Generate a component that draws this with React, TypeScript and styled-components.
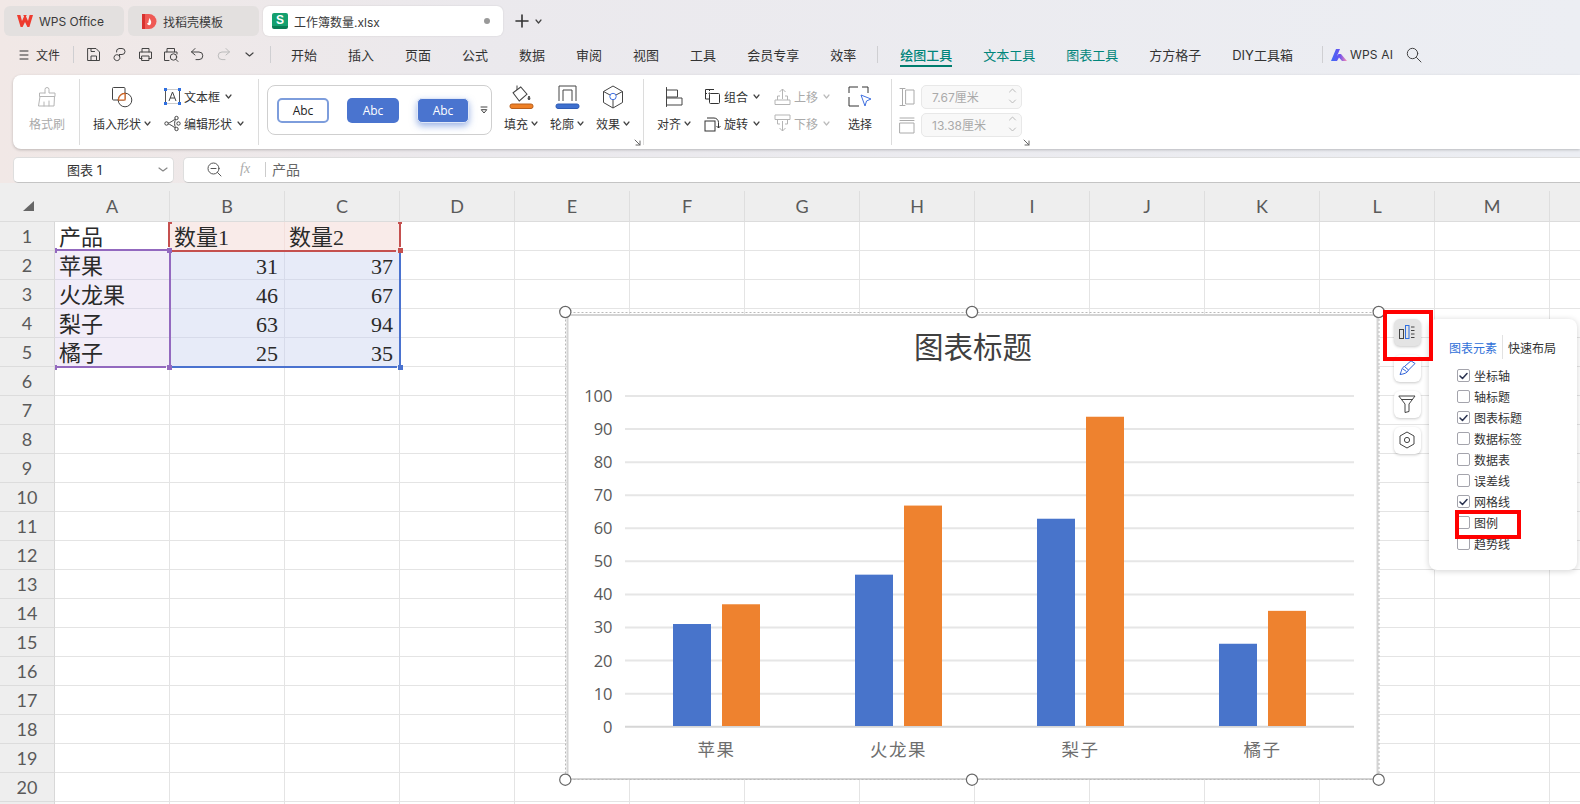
import React from "react";
import styled, { createGlobalStyle } from "styled-components";

const UI = `Inter, "Noto Sans CJK SC", sans-serif`;
const SHEET = `"Liberation Serif", "Noto Sans CJK SC", serif`;

const Global = createGlobalStyle`
  html, body { margin: 0; padding: 0; width: 1580px; height: 804px; overflow: hidden; background: #eee; }
  * { box-sizing: border-box; }
`;

const Page = styled.div`
  width: 1580px; height: 804px; overflow: hidden; display: flex; flex-direction: column;
  font-family: ${UI}; font-size: 12px; color: #333;
  background: linear-gradient(90deg, #f1e8e6 0%, #ebe9ed 30%, #eceef3 100%);
`;

/* ---------- tabs ---------- */
const TabBar = styled.div`display: flex; align-items: stretch; height: 36px; padding: 6px 0 0 4px; gap: 4px;`;
const Tab = styled.div<{ $w: number; $active?: boolean; $pad?: number }>`
  width: ${p => p.$w}px; display: flex; align-items: center; gap: 6px; padding-left: ${p => p.$pad ?? 13}px;
  border-radius: 6px; background: ${p => (p.$active ? "#fff" : "#e3e0df")}; color: #3a3a3a;
  box-shadow: ${p => (p.$active ? "0 0 2px rgba(0,0,0,.12)" : "none")};
`;
const SheetBadge = styled.span`
  width: 16px; height: 16px; border-radius: 2px; background: linear-gradient(#14a06f 80%, #0a7c55 80%);
  color: #fff; font: 700 12px/14px "Liberation Sans", sans-serif; text-align: center;
`;
const TabDot = styled.span`width: 6px; height: 6px; border-radius: 50%; background: #999; margin-left: auto; margin-right: 13px;`;
const NewTab = styled.div`display: flex; align-items: center; gap: 6px; padding-left: 8px; color: #333;`;

/* ---------- menu ---------- */
const MenuBar = styled.div`display: flex; align-items: center; height: 39px; padding: 0 0 2px 19px; flex: none;`;
const MenuFile = styled.div`display: flex; align-items: center; gap: 7px; width: 54px;`;
const MenuSep = styled.span<{ $l: number; $r: number }>`width: 1px; height: 17px; background: #cfcfd2; margin: 0 ${p => p.$r}px 0 ${p => p.$l}px;`;
const QuickIcon = styled.span`width: 26px; display: flex; justify-content: center;`;
const MenuItems = styled.div`display: flex; gap: 31px; align-items: center;`;
const MenuItem = styled.span<{ $tone?: "active" | "green" }>`
  position: relative; font-size: 13px; line-height: 18px; white-space: nowrap;
  color: ${p => (p.$tone ? "#00857a" : "#333")};
  font-weight: ${p => (p.$tone === "active" ? 500 : 400)};
  &::after { content: ${p => (p.$tone === "active" ? '""' : "none")}; position: absolute; left: 0; right: 0; bottom: -3px; height: 2px; background: #007d6e; }
`;
const AiBlock = styled.div`display: flex; align-items: center; gap: 3px; margin-right: 13px; letter-spacing: .2px;`;

/* ---------- ribbon ---------- */
const Ribbon = styled.div`
  height: 74px; margin-left: 13px; flex: none; display: flex; padding: 4px 0; background: #fff;
  border-radius: 8px 0 0 8px; box-shadow: 0 1px 3px rgba(0,0,0,.22);
`;
const Group = styled.div<{ $w: number; $pad?: number; $plain?: boolean }>`
  position: relative; width: ${p => p.$w}px; flex: none; display: flex; padding: 4px 0 0 ${p => p.$pad || 0}px;
  border-right: ${p => (p.$plain ? "none" : "1px solid #dcdcdc")};
`;
const BigButton = styled.div<{ $w: number; $off?: boolean; $ml?: number }>`
  width: ${p => p.$w}px; margin-left: ${p => p.$ml || 0}px; display: grid; grid-template-rows: 27px 26px; justify-items: center; align-items: center;
  color: ${p => (p.$off ? "#aaa" : "#333")}; white-space: nowrap;
`;
const Label = styled.span`display: inline-flex; align-items: center; gap: 3px;`;
const Stack = styled.div<{ $w: number; $ml?: number; $off?: boolean }>`
  width: ${p => p.$w}px; margin-left: ${p => p.$ml || 0}px; display: grid; grid-template-rows: 27px 26px; color: ${p => (p.$off ? "#aaa" : "#333")};
`;
const StackRow = styled.div`
  display: flex; align-items: center; gap: 3px; white-space: nowrap;
  & > svg:last-child { margin-left: 2px; }
`;
const StackIcon = styled.span`width: 17px; display: flex; justify-content: center; flex: none;`;
const StyleBox = styled.div`
  width: 225px; height: 50px; margin: 2px 6px 0 8px; display: flex; align-items: center; padding-left: 9px; position: relative;
  border: 1px solid #cfcfcf; border-radius: 8px; flex: none;
`;
const Abc = styled.div<{ $kind: "line" | "fill" | "glow"; $ml?: number }>`
  width: 52px; height: 25px; margin-left: ${p => p.$ml || 0}px; border-radius: 5px; display: flex; align-items: center; justify-content: center;
  font: 12px "Open Sans", sans-serif;
  color: ${p => (p.$kind === "line" ? "#222" : "#fff")};
  background: ${p => (p.$kind === "line" ? "#fff" : "#4a74cf")};
  border: ${p => (p.$kind === "line" ? "2px solid #7d9ddc" : p.$kind === "glow" ? "1px solid #dfe7f7" : "none")};
  box-shadow: ${p => (p.$kind === "glow" ? "0 3px 7px rgba(74,116,207,.55)" : "none")};
`;
const MoreStyles = styled.span`position: absolute; right: 3px; top: 19px; display: flex;`;
const Corner = styled.span`position: absolute; right: 2px; bottom: -1px; display: flex;`;
const SizeRows = styled.div`display: flex; flex-direction: column; gap: 4px; padding-top: 2px;`;
const SizeRow = styled.div`display: flex; align-items: center; gap: 6px;`;
const Spinner = styled.div`
  width: 101px; height: 24px; border: 1px solid #e8e8e8; border-radius: 5px; background: #f8f8f8; color: #aaa;
  display: flex; align-items: center; justify-content: space-between; padding: 0 4px 2px 10px;
`;

/* ---------- formula ---------- */
const FormulaRow = styled.div`display: flex; height: 26px; margin: 8px 0 0 13px; gap: 9px; flex: none;`;
const NameBox = styled.div`
  width: 161px; background: #fff; border: 1px solid #dedede; border-bottom-color: #c4c4c4; border-radius: 5px;
  display: flex; align-items: center; padding: 0 5px 2px 53px; justify-content: space-between; font-size: 13px;
`;
const Formula = styled.div`
  flex: 1; background: #fff; border: 1px solid #dedede; border-right: none; border-bottom-color: #c4c4c4; border-radius: 5px 0 0 5px;
  display: flex; align-items: center; padding: 0 0 2px 23px; color: #666;
`;
const Fx = styled.span`width: 36px; padding-left: 18px; font: italic 14px "Liberation Serif", serif; color: #aaa;`;
const FormulaSep = styled.span`width: 1px; height: 15px; background: #ccc; margin: 0 6px 0 7px;`;
const FormulaText = styled.span`font-size: 14px;`;

/* ---------- sheet ---------- */
const SheetArea = styled.div`position: relative; flex: 1; background: #fff; overflow: hidden;`;
const HeaderRow = styled.div`display: flex; height: 38.5px; padding-top: 8px; background: #eee; border-bottom: 1px solid #dcdcdc;`;
const CornerCell = styled.div`width: 55px; flex: none; display: flex; align-items: center; justify-content: center; padding-left: 2px;`;
const ColHead = styled.div`
  width: 115px; flex: none; display: flex; align-items: center; justify-content: center; border-right: 1px solid #dedede;
  font: 18px Lato, sans-serif; color: #5a5a5a;
`;
const Row = styled.div`display: flex; height: 29.05px;`;
const RowHead = styled.div`
  width: 55px; flex: none; background: #eee; border-right: 1px solid #d8d8d8; border-bottom: 1px solid #dcdcdc;
  display: flex; align-items: center; justify-content: center; font: 18px Lato, sans-serif; color: #5a5a5a;
`;
const tints = { none: ["#fff", "#e4e4e4"], purple: ["#f2edf8", "#dcd9e6"], red: ["#f9ebe9", "#f3dfdc"], blue: ["#e7ebf8", "#d7dbea"] } as const;
const Cell = styled.div<{ $tint: keyof typeof tints; $num?: boolean }>`
  width: 115px; flex: none; padding: 0 6px 0 4px; display: flex; align-items: flex-end;
  justify-content: ${p => (p.$num ? "flex-end" : "flex-start")};
  background: ${p => tints[p.$tint][0]};
  border-right: 1px solid ${p => tints[p.$tint][1]}; border-bottom: 1px solid ${p => tints[p.$tint][1]};
  font: 22px/24px ${SHEET}; color: #2a2a2a; white-space: nowrap;
`;
/* coloured reference ranges lie over the cells */
const RangeMark = styled.span<{ $x: number; $y: number; $w: number; $h: number; $c: string }>`
  position: absolute; left: ${p => p.$x}px; top: ${p => p.$y - 183}px; width: ${p => p.$w}px; height: ${p => p.$h}px; background: ${p => p.$c};
`;

/* ---------- chart ---------- */
const ChartFrame = styled.div`position: absolute; left: 565px; top: 129px; width: 814px; height: 468px;`;
const ChartSvg = styled.svg`display: block; overflow: visible;`;
const ChartTools = styled.div`position: absolute; left: 1393.5px; top: 135.5px; display: flex; flex-direction: column; gap: 9px;`;
const ToolButton = styled.div<{ $on?: boolean }>`
  width: 27px; height: 27px; border-radius: 6px; display: flex; align-items: center; justify-content: center;
  background: ${p => (p.$on ? "#e4e4e4" : "#fff")}; box-shadow: 0 1px 3px rgba(0,0,0,.22);
`;
const Panel = styled.div`
  position: absolute; left: 1429px; top: 136px; width: 148px; height: 251px; background: #fff; border-radius: 8px;
  box-shadow: 0 1px 6px rgba(0,0,0,.18); padding-top: 16px; display: flex; flex-direction: column;
`;
const PanelTabs = styled.div`display: flex; align-items: center; height: 24px; padding-left: 20px;`;
const PanelTab = styled.span<{ $on?: boolean }>`color: ${p => (p.$on ? "#2f6fd8" : "#333")};`;
const PanelSep = styled.span`width: 1px; height: 24px; background: #e2e2e2; margin: 0 5px;`;
const OptionList = styled.div`padding: 6px 0 0 28px;`;
const Option = styled.div`display: flex; align-items: center; height: 21px; gap: 4px; color: #333;`;
const Check = styled.span`
  width: 13px; height: 13px; border: 1px solid #a4a4ac; border-radius: 2px; background: #fff; display: flex; align-items: center; justify-content: center; flex: none;
`;
const RedBox = styled.div<{ $x: number; $y: number; $w: number; $h: number }>`
  position: absolute; left: ${p => p.$x}px; top: ${p => p.$y - 183}px; width: ${p => p.$w}px; height: ${p => p.$h}px; border: 4px solid #f00;
`;

/* ---------- icons ---------- */
const Svg: React.FC<{ w?: number; h?: number; c?: string; sw?: number; children: React.ReactNode }> = ({ w = 16, h, c = "#444", sw = 1, children }) => (
  <svg width={w} height={h ?? w} viewBox={`0 0 ${w} ${h ?? w}`} fill="none" stroke={c} strokeWidth={sw} strokeLinecap="round" strokeLinejoin="round">{children}</svg>
);
const Chev: React.FC<{ c?: string; w?: number }> = ({ c = "#444", w = 7 }) => (
  <Svg w={w} h={5} c={c} sw={1.2}><path d={`M1 1 L${w / 2} 4 L${w - 1} 1`} /></Svg>
);
const Updown: React.FC = () => (
  <Svg w={9} h={18} c="#bbb"><path d="M1.5 5 L4.5 2 L7.5 5 M1.5 13 L4.5 16 L7.5 13" /></Svg>
);
const CornerArrow: React.FC = () => (
  <Svg w={7} h={7} c="#666"><path d="M1 1 L6 6 M6 2 V6 H2" /></Svg>
);

const WpsLogo = () => (
  <svg width="16" height="12" viewBox="0 0 16 12"><path d="M0 0 H3.4 L5 6 L7 1.6 H9 L11 6 L12.6 0 H16 L12.4 12 H10.4 L8 7 L5.6 12 H3.6 Z M6.2 0 H9.8 L8 3 Z" fill="#ee3b2e" /></svg>
);
const DocerLogo = () => (
  <svg width="15" height="15" viewBox="0 0 15 15">
    <path d="M0 0 H7 A7.5 7.5 0 0 1 7 15 H0 Z" fill="#ef5a55" /><rect width="3" height="15" fill="#d8322f" />
    <path d="M7.5 4 C9 7 10 8 8.5 10.5 C7.5 12 5 11 5 9 C6 9.5 6.5 9 6.5 8 C6.5 7 7 5.5 7.5 4 Z" fill="#fff" />
  </svg>
);
const AiLogo = () => (
  <svg width="16" height="12" viewBox="0 0 16 12">
    <defs><linearGradient id="ai" x1="0" x2="1"><stop offset="0" stopColor="#3d6cf5" /><stop offset=".55" stopColor="#6a52f0" /><stop offset="1" stopColor="#ff8fb0" /></linearGradient></defs>
    <path d="M0 12 L5 0 H9 L6 7 L7.5 5 L10 5 L16 12 H11 L8 8.5 L6 12 Z" fill="url(#ai)" />
  </svg>
);
const iSave = <Svg w={15}><path d="M2 1.5 H10 L13.5 5 V13.5 H2 Z M5 13.5 V9 H10.5 V13.5 M5 1.5 V4.5 H8.5" /></Svg>;
const iKey = <Svg w={15}><path d="M7.5 7.5 H10 A3 3 0 0 0 10 1.5 H7 A3 3 0 0 0 4.5 5 M7.5 7.5 V9 M7.5 9 A3 3 0 1 1 2 10.5 A3 3 0 0 1 7.5 9" /></Svg>;
const iPrint = <Svg w={15}><path d="M4 5 V1.5 H11 V5 M4 11.5 H1.5 V5 H13.5 V11.5 H11 M4 9 H11 V13.5 H4 Z" /></Svg>;
const iPreview = <Svg w={16}><path d="M6 13.5 H1.5 V5 L4 5 V1.5 H11.5 V5 H14 V7 M4 5 H11.5" /><circle cx="10.5" cy="10" r="3.2" /><path d="M13 12.5 L15 14.5" /></Svg>;
const iUndo = <Svg w={15} c="#444"><path d="M5 1.5 L1.5 5 L5 8 M1.5 5 H9 A3.8 3.8 0 0 1 9 12.6 H6" /></Svg>;
const iRedo = <Svg w={15} c="#bbb"><path d="M10 1.5 L13.5 5 L10 8 M13.5 5 H6 A3.8 3.8 0 0 0 6 12.6 H9" /></Svg>;

const iBrush = (
  <Svg w={22} c="#b5b5b5"><path d="M9 7 V3.5 A2 2 0 0 1 13 3.5 V7 H19 V10.5 H3.5 V7 H9 M4 10.5 L2.5 20 H18 L18.5 10.5 M8 20 V16 M13 20 V15" /></Svg>
);
const iShape = (
  <svg width="22" height="22" viewBox="0 0 22 22" fill="none" stroke="#444">
    <rect x="1.5" y="1.5" width="12.5" height="12.5" rx="1" />
    <circle cx="14" cy="14" r="6.8" />
    <path d="M7.4 14 H14 V7.4 A6.8 6.8 0 0 0 7.4 14 Z" fill="#fff" stroke="#d7641f" strokeWidth="1.2" />
  </svg>
);
const iText = (
  <svg width="17" height="17" viewBox="0 0 17 17" fill="none">
    <path d="M1.5 2 V15 M15.5 2 V15" stroke="#555" /><path d="M5 13 L8.5 4 L12 13 M6.2 10 H10.8" stroke="#444" />
    <path d="M2 1.5 H15 M2 15.5 H15" stroke="#ccc" />
    {[[0, 0], [14, 0], [0, 14], [14, 14]].map(([x, y]) => <rect key={`${x}${y}`} x={x} y={y} width="3" height="3" fill="#2f6fe0" />)}
  </svg>
);
const iNodes = (
  <svg width="17" height="17" viewBox="0 0 17 17" fill="none" stroke="#444">
    <path d="M3 8.5 C6 8 10 5 12.5 3 M3 8.5 C6 9 10 12 12.5 14" /><path d="M12.5 3 C10 6 10 11 12.5 14" />
    {[[2.5, 8.5], [12.5, 3], [12.5, 14], [14.5, 8.5]].map(([x, y]) => <circle key={`${x}${y}`} cx={x} cy={y} r="1.7" fill="#fff" />)}
  </svg>
);
const Bar: React.FC<{ c: string; b: string }> = ({ c, b }) => <rect x="1" y="20" width="23" height="4.5" rx="2" fill={c} stroke={b} />;
const iFill = (
  <svg width="25" height="26" viewBox="0 0 25 26" fill="none" stroke="#444">
    <path d="M4 9.5 L11 3 L18 9.5 L11 17 Z" transform="rotate(6 11 10)" /><path d="M8 6 L8 1.5" /><path d="M20 12 C19 14 18.6 15.5 20 15.8 C21.4 15.5 21 14 20 12 Z" fill="#444" />
    <Bar c="#ef8127" b="#b85f1c" />
  </svg>
);
const iOutline = (
  <svg width="25" height="26" viewBox="0 0 25 26" fill="none" stroke="#444">
    <path d="M4 17 V2 H21 V17" /><path d="M8 17 V6 H17 V17" /><Bar c="#3f70cf" b="#2e5cb5" />
  </svg>
);
const iEffect = (
  <svg width="22" height="24" viewBox="0 0 22 24" fill="none" stroke="#444">
    <path d="M11 1 L20.5 6.5 V17.5 L11 23 L1.5 17.5 V6.5 Z" /><path d="M1.5 6.5 L8 10 M20.5 6.5 L14 10 M11 15 V23" />
    <circle cx="11" cy="11.5" r="3.2" stroke="#3f70e0" />
  </svg>
);
const iAlign = <Svg w={18} h={20} sw={1}><path d="M1.5 0.5 V19.5 M1.5 3 H12.5 V10 H1.5 M1.5 11 H17 V18 H1.5" /></Svg>;
const iGroup = (
  <svg width="17" height="17" viewBox="0 0 17 17" fill="none" stroke="#333">
    <path d="M10 1.5 H1.5 V11 H5" /><rect x="5.5" y="5.5" width="10" height="10" rx="1" fill="#fff" /><path d="M5.5 1.5 V5.5 M1.5 5.5 H5.5" strokeDasharray="1.5 1.5" />
  </svg>
);
const iRotate = (
  <svg width="17" height="17" viewBox="0 0 17 17" fill="none" stroke="#333">
    <rect x="1" y="6" width="10" height="10" /><path d="M3 3 H10 A4.5 4.5 0 0 1 14.5 7.5 V13 M12.5 11 L14.5 13 L16.5 11" />
  </svg>
);
const iUp = (
  <svg width="17" height="18" viewBox="0 0 17 18" fill="none" stroke="#b5b5b5">
    <path d="M8.5 1 V11 M5.5 4 L8.5 1 L11.5 4" /><path d="M3.5 8 H6 M11 8 H13.5 V12 M3.5 8 V12 M1 12 H16 V16.5 H1 Z" />
  </svg>
);
const iDown = (
  <svg width="17" height="18" viewBox="0 0 17 18" fill="none" stroke="#b5b5b5">
    <path d="M8.5 7 V17 M5.5 14 L8.5 17 L11.5 14" /><path d="M1 1 H16 V5.5 H1 Z M3.5 6 V10 H6 M13.5 6 V10 H11" />
  </svg>
);
const iSelect = (
  <svg width="24" height="22" viewBox="0 0 24 22" fill="none">
    <path d="M1 7 V1 H10 M14 1 H20 V7 M1 11 V20 H11" stroke="#333" />
    <path d="M13 9 L23 13 L18.5 15 L17 20 Z" fill="#fff" stroke="#3f70e0" />
  </svg>
);
const iWidth = <Svg w={16} h={20} c="#aaa"><path d="M1 1.5 H6 M1 18.5 H6 M3.5 1.5 V18.5 M7 3 H15 V17 H7 Z" /></Svg>;
const iHeight = <Svg w={16} h={17} c="#aaa"><path d="M1 1 H15 M1 3.5 H15 M1 6 H15 V16 H1 Z" /></Svg>;
const iMag = <Svg w={15} c="#555"><circle cx="6.5" cy="6.5" r="5.5" /><path d="M10.5 10.5 L14 14 M4 6.5 H9" /></Svg>;

const toolIcons = [
  <svg key="b" width="16" height="14" viewBox="0 0 16 14" fill="none" stroke="#444"><rect x="0.5" y="4.5" width="4" height="9" /><rect x="6.5" y="0.5" width="3.5" height="13" stroke="#2f6fe0" /><path d="M12 2 H15.5 M12 5.5 H15.5 M12 9 H15.5 M12 12.5 H15.5" /></svg>,
  <svg key="p" width="17" height="16" viewBox="0 0 17 16" fill="none" stroke="#2f62d8"><path d="M5.5 6.5 L12 0.8 L16 3.5 L9.5 10 Z" fill="#fff" /><path d="M5.5 6.5 C3 7 3 10 1 14.5 C5 14 8.5 13 9.5 10" /><path d="M4 9 L7.5 11.5" /></svg>,
  <svg key="f" width="18" height="18" viewBox="0 0 18 18" fill="none" stroke="#444"><path d="M0.8 1 H17 L11 9 V16.5 L7 17.5 V9 Z M3 4.5 H15" /></svg>,
  <svg key="h" width="16" height="18" viewBox="0 0 16 18" fill="none" stroke="#444"><path d="M8 1 L15 5 V13 L8 17 L1 13 V5 Z" /><circle cx="8" cy="9" r="2.6" /></svg>,
];

/* ---------- data ---------- */
const menuA = ["开始", "插入", "页面", "公式", "数据", "审阅", "视图", "工具", "会员专享", "效率"];
const cols = "ABCDEFGHIJKLMN".split("");
const table: Record<number, [string, string, string]> = {
  1: ["产品", "数量1", "数量2"],
  2: ["苹果", "31", "37"],
  3: ["火龙果", "46", "67"],
  4: ["梨子", "63", "94"],
  5: ["橘子", "25", "35"],
};
const options: [string, boolean][] = [
  ["坐标轴", true], ["轴标题", false], ["图表标题", true], ["数据标签", false], ["数据表", false],
  ["误差线", false], ["网格线", true], ["图例", false], ["趋势线", false],
];
const series = [
  { name: "苹果", x: 673, a: 31, b: 37 },
  { name: "火龙果", x: 855, a: 46, b: 67 },
  { name: "梨子", x: 1037, a: 63, b: 94 },
  { name: "橘子", x: 1219, a: 25, b: 35 },
];
const RED = "#c5504f", PURPLE = "#9369bf", BLUE = "#4a72cf";
const marks: [number, number, number, number, string][] = [
  [55, 249, 112, 2, PURPLE], [169, 253, 2, 113, PURPLE], [55, 366, 111, 2, PURPLE],
  [167, 247.5, 5, 5, PURPLE], [167, 364.5, 5, 5, PURPLE], [55, 247.5, 2, 5, PURPLE], [55, 364.5, 2, 5, PURPLE],
  [172, 366, 225, 2, BLUE], [399, 253, 2, 112, BLUE], [397.5, 364.5, 5, 5, BLUE],
  [168, 224, 2, 23, RED], [399, 224, 2, 23, RED], [172, 250, 224, 2, RED],
  [167.5, 221.5, 4, 2, RED], [397.5, 221.5, 4, 2, RED], [397.5, 248, 5, 5, RED],
];

const y = (v: number) => 726.7 - 3.307 * v;
const Chart: React.FC = () => (
  <ChartFrame>
    <ChartSvg width="814" height="468" viewBox="565 312 814 468">
      <rect x="567.5" y="315" width="810" height="464" fill="#fff" stroke="#d4d4d4" strokeWidth="2" />
      <rect x="565.5" y="312.5" width="813.5" height="467" fill="none" stroke="#b9b9b9" strokeDasharray="2 2" />
      <text x="973" y="358" textAnchor="middle" fontSize="29.5" fill="#404040" fontFamily='"Noto Sans CJK SC", sans-serif'>图表标题</text>
      {[100, 90, 80, 70, 60, 50, 40, 30, 20, 10, 0].map(v => (
        <g key={v}>
          <line x1="625" x2="1354" y1={y(v)} y2={y(v)} stroke={v === 0 ? "#d6d6d6" : "#e6e6e6"} strokeWidth="2" />
          <text x="612.5" y={y(v) + 6} textAnchor="end" fontSize="16.5" fill="#595959" fontFamily='"Open Sans", sans-serif'>{v}</text>
        </g>
      ))}
      {series.map(s => (
        <g key={s.name}>
          <rect x={s.x} y={726 - 3.29 * s.a} width="38" height={3.29 * s.a} fill="#4874cb" />
          <rect x={s.x + 49} y={726 - 3.29 * s.b} width="38" height={3.29 * s.b} fill="#ee822f" />
          <text x={s.x + 43.5} y="756" textAnchor="middle" fontSize="17.5" letterSpacing="1.5" fill="#6e6e6e" fontFamily='"Noto Sans CJK SC", sans-serif'>{s.name}</text>
        </g>
      ))}
      {[565.3, 972, 1378.7].flatMap(cx => [312, 779.7].map(cy => (
        <circle key={`${cx}-${cy}`} cx={cx} cy={cy} r="5.6" fill="#fff" stroke="#666" strokeWidth="1.2" />
      )))}
    </ChartSvg>
  </ChartFrame>
);

export default function App() {
  return (
    <Page>
      <Global />
      <TabBar>
        <Tab $w={120}><WpsLogo /><span>WPS Office</span></Tab>
        <Tab $w={131} $pad={14}><DocerLogo /><span>找稻壳模板</span></Tab>
        <Tab $w={240} $active $pad={9}><SheetBadge>S</SheetBadge><span>工作簿数量.xlsx</span><TabDot /></Tab>
        <NewTab>
          <Svg w={14} c="#333" sw={1.6}><path d="M7 1 V13 M1 7 H13" /></Svg>
          <Chev />
        </NewTab>
      </TabBar>

      <MenuBar>
        <MenuFile>
          <Svg w={10} h={10} c="#333"><path d="M1 1 H9 M1 5 H9 M1 9 H9" /></Svg>
          <span>文件</span>
        </MenuFile>
        <MenuSep $l={0} $r={6} />
        {[iSave, iKey, iPrint, iPreview, iUndo, iRedo].map((ic, i) => <QuickIcon key={i}>{ic}</QuickIcon>)}
        <QuickIcon><Chev w={9} /></QuickIcon>
        <MenuSep $l={8} $r={20} />
        <MenuItems>
          {menuA.map(m => <MenuItem key={m}>{m}</MenuItem>)}
        </MenuItems>
        <MenuSep $l={21} $r={22} />
        <MenuItems>
          <MenuItem $tone="active">绘图工具</MenuItem>
          <MenuItem $tone="green">文本工具</MenuItem>
          <MenuItem $tone="green">图表工具</MenuItem>
          <MenuItem>方方格子</MenuItem>
          <MenuItem>DIY工具箱</MenuItem>
        </MenuItems>
        <MenuSep $l={29} $r={8} />
        <AiBlock><AiLogo /><span>WPS AI</span></AiBlock>
        <Svg w={16} c="#444"><circle cx="6.5" cy="6.5" r="5.2" /><path d="M10.5 10.5 L15 15" /></Svg>
      </MenuBar>

      <Ribbon>
        <Group $w={67} $pad={2}>
          <BigButton $w={65} $off>{iBrush}<span>格式刷</span></BigButton>
        </Group>
        <Group $w={179} $pad={11}>
          <BigButton $w={62}>{iShape}<Label>插入形状<Chev /></Label></BigButton>
          <Stack $w={90} $ml={11}>
            <StackRow><StackIcon>{iText}</StackIcon><span>文本框</span><Chev /></StackRow>
            <StackRow><StackIcon>{iNodes}</StackIcon><span>编辑形状</span><Chev /></StackRow>
          </Stack>
        </Group>
        <Group $w={385}>
          <StyleBox>
            <Abc $kind="line">Abc</Abc>
            <Abc $kind="fill" $ml={18}>Abc</Abc>
            <Abc $kind="glow" $ml={18}>Abc</Abc>
            <MoreStyles><Svg w={8} h={10} c="#444"><path d="M1 2 H7 M1.5 5 L4 8 L6.5 5 Z" /></Svg></MoreStyles>
          </StyleBox>
          <BigButton $w={46}>{iFill}<Label>填充<Chev /></Label></BigButton>
          <BigButton $w={46}>{iOutline}<Label>轮廓<Chev /></Label></BigButton>
          <BigButton $w={46}>{iEffect}<Label>效果<Chev /></Label></BigButton>
          <Corner><CornerArrow /></Corner>
        </Group>
        <Group $w={248} $pad={8}>
          <BigButton $w={44}>{iAlign}<Label>对齐<Chev /></Label></BigButton>
          <Stack $w={70} $ml={8}>
            <StackRow><StackIcon>{iGroup}</StackIcon><span>组合</span><Chev /></StackRow>
            <StackRow><StackIcon>{iRotate}</StackIcon><span>旋转</span><Chev /></StackRow>
          </Stack>
          <Stack $w={66} $off>
            <StackRow><StackIcon>{iUp}</StackIcon><span>上移</span><Chev c="#bbb" /></StackRow>
            <StackRow><StackIcon>{iDown}</StackIcon><span>下移</span><Chev c="#bbb" /></StackRow>
          </Stack>
          <BigButton $w={40}>{iSelect}<span>选择</span></BigButton>
        </Group>
        <Group $w={140} $pad={6} $plain>
          <SizeRows>
            <SizeRow><StackIcon>{iWidth}</StackIcon><Spinner><span>7.67厘米</span><Updown /></Spinner></SizeRow>
            <SizeRow><StackIcon>{iHeight}</StackIcon><Spinner><span>13.38厘米</span><Updown /></Spinner></SizeRow>
          </SizeRows>
          <Corner><CornerArrow /></Corner>
        </Group>
      </Ribbon>

      <FormulaRow>
        <NameBox><span>图表 1</span><Chev c="#888" w={10} /></NameBox>
        <Formula>{iMag}<Fx>fx</Fx><FormulaSep /><FormulaText>产品</FormulaText></Formula>
      </FormulaRow>

      <SheetArea>
        <HeaderRow>
          <CornerCell><svg width="12" height="10" viewBox="0 0 12 10"><path d="M11 0 V10 H0 Z" fill="#666" /></svg></CornerCell>
          {cols.map(c => <ColHead key={c}>{c === "N" ? "" : c}</ColHead>)}
        </HeaderRow>
        {Array.from({ length: 21 }, (_, i) => i + 1).map(r => (
          <Row key={r}>
            <RowHead>{r <= 20 ? r : ""}</RowHead>
            {cols.map((c, ci) => {
              const d = ci < 3 ? table[r]?.[ci] : undefined;
              const tint = r > 5 || ci > 2 ? "none" : ci === 0 ? (r === 1 ? "none" : "purple") : r === 1 ? "red" : "blue";
              return <Cell key={c} $tint={tint} $num={r > 1 && ci > 0}>{d}</Cell>;
            })}
          </Row>
        ))}
        {marks.map(([mx, my, w, h, col], i) => <RangeMark key={i} $x={mx} $y={my} $w={w} $h={h} $c={col} />)}
        <Chart />
        <ChartTools>
          {toolIcons.map((ic, i) => <ToolButton key={i} $on={i === 0}>{ic}</ToolButton>)}
        </ChartTools>
        <Panel>
          <PanelTabs>
            <PanelTab $on>图表元素</PanelTab><PanelSep /><PanelTab>快速布局</PanelTab>
          </PanelTabs>
          <OptionList>
            {options.map(([t, on]) => (
              <Option key={t}>
                <Check>{on && <Svg w={9} h={8} c="#2b3350" sw={1.5}><path d="M1 4 L3.5 6.5 L8 1.5" /></Svg>}</Check>
                <span>{t}</span>
              </Option>
            ))}
          </OptionList>
        </Panel>
        <RedBox $x={1383} $y={310} $w={50} $h={51} />
        <RedBox $x={1455} $y={510} $w={66} $h={29} />
      </SheetArea>
    </Page>
  );
}
